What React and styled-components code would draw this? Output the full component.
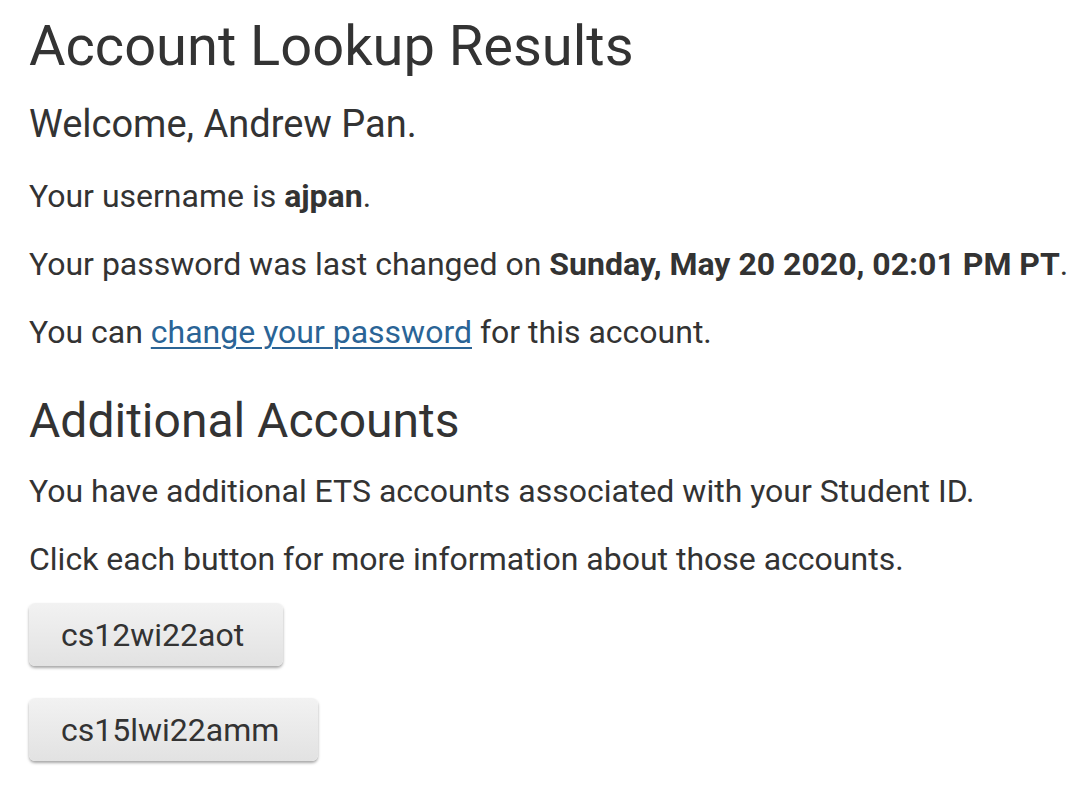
import React from 'react'
import styled, { createGlobalStyle } from 'styled-components'

const GlobalStyle = createGlobalStyle`
  html, body {
    margin: 0;
    padding: 0;
    background: #ffffff;
  }
  body {
    font-family: Roboto, "Liberation Sans", sans-serif;
    color: #333333;
  }
`

const accounts = ['cs12wi22aot', 'cs15lwi22amm']

const App = () => {
  return (
    <>
      <GlobalStyle />
      <Page>
        <Title>Account Lookup Results</Title>
        <Welcome>Welcome, Andrew Pan.</Welcome>
        <Text>Your username is <b>ajpan</b>.</Text>
        <Text>Your password was last changed on <b>Sunday, May 20 2020, 02:01 PM PT</b>.</Text>
        <Text>You can <Link href="#">change your password</Link> for this account.</Text>
        <Section>Additional Accounts</Section>
        <Text>You have additional ETS accounts associated with your Student ID.</Text>
        <Text>Click each button for more information about those accounts.</Text>
        <Buttons>
          {accounts.map((name) => (
            <AccountButton key={name}>{name}</AccountButton>
          ))}
        </Buttons>
      </Page>
    </>
  )
}

const Page = styled.main`
  display: flex;
  flex-direction: column;
  align-items: flex-start;
  padding: 14px 20px 30px 29px;
`

const Title = styled.h1`
  margin: 0;
  font-size: 56px;
  line-height: 64px;
  font-weight: 400;
`

const Welcome = styled.h3`
  margin: 24px 0 0;
  font-size: 38px;
  line-height: 44px;
  font-weight: 400;
`

const Section = styled.h2`
  margin: 43px 0 0;
  font-size: 48px;
  line-height: 56px;
  font-weight: 400;
`

const Text = styled.p`
  margin: 32px 0 0;
  font-size: 32px;
  line-height: 36px;
  white-space: nowrap;

  ${Section} + & {
    margin-top: 24px;
  }
  b {
    font-weight: 700;
  }
`

const Link = styled.a`
  color: #2a6496;
  text-decoration: underline;
  text-decoration-thickness: 2px;
  text-underline-offset: 4px;
`

const Buttons = styled.div`
  display: flex;
  flex-direction: column;
  align-items: flex-start;
  gap: 32px;
  margin-top: 26px;
`

const AccountButton = styled.button`
  height: 63px;
  padding: 0 39px 0 32px;
  border: none;
  border-radius: 6px;
  background: linear-gradient(#f2f2f2, #e2e2e2);
  box-shadow: 0 2px 3px rgba(0, 0, 0, 0.35);
  font-family: Roboto, "Liberation Sans", sans-serif;
  font-size: 32px;
  color: #333333;
  cursor: pointer;
`

export default App
